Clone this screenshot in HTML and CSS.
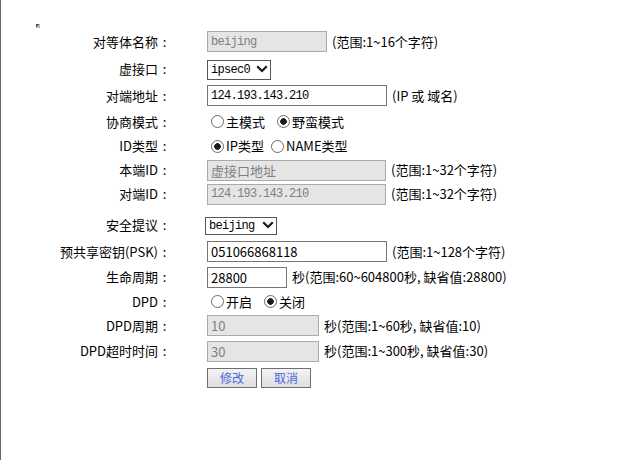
FILE: index.html
```html
<!DOCTYPE html>
<html lang="zh-CN">
<head>
    <meta charset="UTF-8">
    <meta name="viewport" content="width=device-width, initial-scale=1.0">
    <title>IPSec 对等体配置</title>
    <link rel="stylesheet" href="styles.css">
</head>
<body>
    <!-- broken image marker at the top -->
    <div class="top"><span class="broken-img"></span></div>

    <form class="cfg">
        <div class="row">
            <label class="lbl">对等体名称<span class="colon">:</span></label>
            <div class="ctl">
                <input type="text" class="txt mono w-name" value="beijing" disabled>
                <span class="hint">(范围:1~16个字符)</span>
            </div>
        </div>

        <div class="row">
            <label class="lbl">虚接口<span class="colon">:</span></label>
            <div class="ctl">
                <span class="sel-wrap">
                    <select class="sel w-if"><option>ipsec0</option></select>
                    <svg class="chev" width="12" height="8" viewBox="0 0 12 8"><path d="M1.2 1.2 L6 6 L10.8 1.2" fill="none" stroke="#1a1a1a" stroke-width="2.2"/></svg>
                </span>
            </div>
        </div>

        <div class="row">
            <label class="lbl">对端地址<span class="colon">:</span></label>
            <div class="ctl">
                <input type="text" class="txt mono w-long on" value="124.193.143.210">
                <span class="hint">(IP 或 域名)</span>
            </div>
        </div>

        <div class="row row-25">
            <label class="lbl">协商模式<span class="colon">:</span></label>
            <div class="ctl radios">
                <label class="opt"><input type="radio" name="mode" class="rad">主模式</label>
                <label class="opt"><input type="radio" name="mode" class="rad" checked>野蛮模式</label>
            </div>
        </div>

        <div class="row row-24">
            <label class="lbl">ID类型<span class="colon">:</span></label>
            <div class="ctl radios tight">
                <label class="opt"><input type="radio" name="idtype" class="rad" checked>IP类型</label>
                <label class="opt"><input type="radio" name="idtype" class="rad">NAME类型</label>
            </div>
        </div>

        <div class="row row-24">
            <label class="lbl">本端ID<span class="colon">:</span></label>
            <div class="ctl">
                <input type="text" class="txt w-id" value="虚接口地址" disabled>
                <span class="hint">(范围:1~32个字符)</span>
            </div>
        </div>

        <div class="row row-24">
            <label class="lbl">对端ID<span class="colon">:</span></label>
            <div class="ctl">
                <input type="text" class="txt mono w-id" value="124.193.143.210" disabled>
                <span class="hint">(范围:1~32个字符)</span>
            </div>
        </div>

        <div class="row gap-5">
            <label class="lbl">安全提议<span class="colon">:</span></label>
            <div class="ctl">
                <span class="sel-wrap">
                    <select class="sel w-prop"><option>beijing</option></select>
                    <svg class="chev" width="12" height="8" viewBox="0 0 12 8"><path d="M1.2 1.2 L6 6 L10.8 1.2" fill="none" stroke="#1a1a1a" stroke-width="2.2"/></svg>
                </span>
            </div>
        </div>

        <div class="row">
            <label class="lbl">预共享密钥(PSK)<span class="colon">:</span></label>
            <div class="ctl">
                <input type="text" class="txt w-long on" value="051066868118">
                <span class="hint">(范围:1~128个字符)</span>
            </div>
        </div>

        <div class="row row-24">
            <label class="lbl">生命周期<span class="colon">:</span></label>
            <div class="ctl">
                <input type="text" class="txt w-life on" value="28800">
                <span class="hint">秒(范围:60~604800秒, 缺省值:28800)</span>
            </div>
        </div>

        <div class="row row-25">
            <label class="lbl">DPD<span class="colon">:</span></label>
            <div class="ctl radios">
                <label class="opt"><input type="radio" name="dpd" class="rad">开启</label>
                <label class="opt"><input type="radio" name="dpd" class="rad" checked>关闭</label>
            </div>
        </div>

        <div class="row row-23">
            <label class="lbl">DPD周期<span class="colon">:</span></label>
            <div class="ctl">
                <input type="text" class="txt w-dpd" value="10" disabled>
                <span class="hint">秒(范围:1~60秒, 缺省值:10)</span>
            </div>
        </div>

        <div class="row row-24 gap-2">
            <label class="lbl">DPD超时时间<span class="colon">:</span></label>
            <div class="ctl">
                <input type="text" class="txt w-dpd" value="30" disabled>
                <span class="hint">秒(范围:1~300秒, 缺省值:30)</span>
            </div>
        </div>

        <div class="row row-20 gap-5">
            <span class="lbl"></span>
            <div class="ctl btns">
                <button type="button" class="btn">修改</button>
                <button type="button" class="btn">取消</button>
            </div>
        </div>
    </form>
</body>
</html>
```

FILE: styles.css
```css
/* Page */
body {
    margin: 0;
    min-height: 100vh;
    box-sizing: border-box;
    border-left: 1px solid #666;
    font-family: "Noto Sans CJK SC", sans-serif;
    font-size: 13px;
    color: #000;
    background: #fff;
}

.top {
    height: 28px;
    box-sizing: border-box;
    padding: 24px 0 0 35px;
}

.broken-img {
    display: block;
    width: 4px;
    height: 4px;
    background: linear-gradient(135deg, #555 0 50%, #bbb 50% 100%);
}

/* Form rows */
.cfg {
    margin: 0;
}

.row {
    display: grid;
    grid-template-columns: 170px 1fr;
    column-gap: 36px;
    align-items: center;
    height: 27px;
}

.row-25 { height: 25px; }
.row-24 { height: 24px; }
.row-23 { height: 23px; }
.row-20 { height: 20px; }
.gap-5 { margin-top: 5px; }
.gap-2 { margin-top: 2px; }

.lbl {
    text-align: right;
    line-height: 16px;
    white-space: nowrap;
}

.colon {
    display: inline-block;
    width: 13px;
    text-align: center;
}

.ctl {
    display: flex;
    align-items: center;
    gap: 5px;
    white-space: nowrap;
}

.hint {
    line-height: 16px;
}

/* Text inputs */
.txt {
    box-sizing: border-box;
    height: 21px;
    margin: 0;
    padding: 0 3px;
    border: 1px solid #aaa;
    background: #e5e5e5;
    color: #808080;
    font-family: "Noto Sans CJK SC", sans-serif;
    font-size: 13px;
    outline: none;
}

.txt.on {
    border-color: #767676;
    background: #fff;
    color: #000;
}

.mono {
    font-family: "Liberation Mono", monospace;
    font-size: 12px;
    letter-spacing: -0.7px;
}

.w-name { width: 120px; }
.w-long { width: 180px; }
.w-id { width: 179px; }
.w-life { width: 80px; }
.w-dpd { width: 112px; }

/* Selects */
.sel-wrap {
    position: relative;
    display: inline-block;
}

.sel {
    appearance: none;
    -webkit-appearance: none;
    box-sizing: border-box;
    margin: 0;
    padding: 0 0 0 3px;
    border: 1px solid #555;
    border-radius: 0;
    background: #fff;
    color: #000;
    font-family: "Liberation Mono", monospace;
    font-size: 12px;
    letter-spacing: -0.7px;
}

.w-if { width: 64px; height: 20px; }
.w-prop { width: 72px; height: 18px; margin-left: -2px; }

.chev {
    position: absolute;
    right: 3px;
    top: 50%;
    margin-top: -4px;
    pointer-events: none;
}

/* Radios */
.radios {
    gap: 0;
}

.opt {
    display: inline-flex;
    align-items: center;
    margin-right: 8px;
    line-height: 16px;
}

.tight .opt {
    margin-right: 3px;
}

.rad {
    appearance: none;
    -webkit-appearance: none;
    width: 13px;
    height: 13px;
    margin: 0 2px 0 4px;
    border: 1px solid #6a6a6a;
    border-radius: 50%;
    background: #fff;
    box-sizing: border-box;
}

.rad:checked {
    background: radial-gradient(circle, #1a1a1a 0 3px, #fff 3.5px);
}

/* Buttons */
.btns {
    gap: 4px;
}

.btn {
    box-sizing: border-box;
    width: 50px;
    height: 20px;
    margin: 0;
    padding: 0;
    border: 1px solid #6f6f6f;
    background: linear-gradient(#f4f4f4, #dedede);
    color: #4a66e0;
    font-family: "Noto Sans CJK SC", sans-serif;
    font-size: 12px;
    line-height: 18px;
    cursor: pointer;
}
```
